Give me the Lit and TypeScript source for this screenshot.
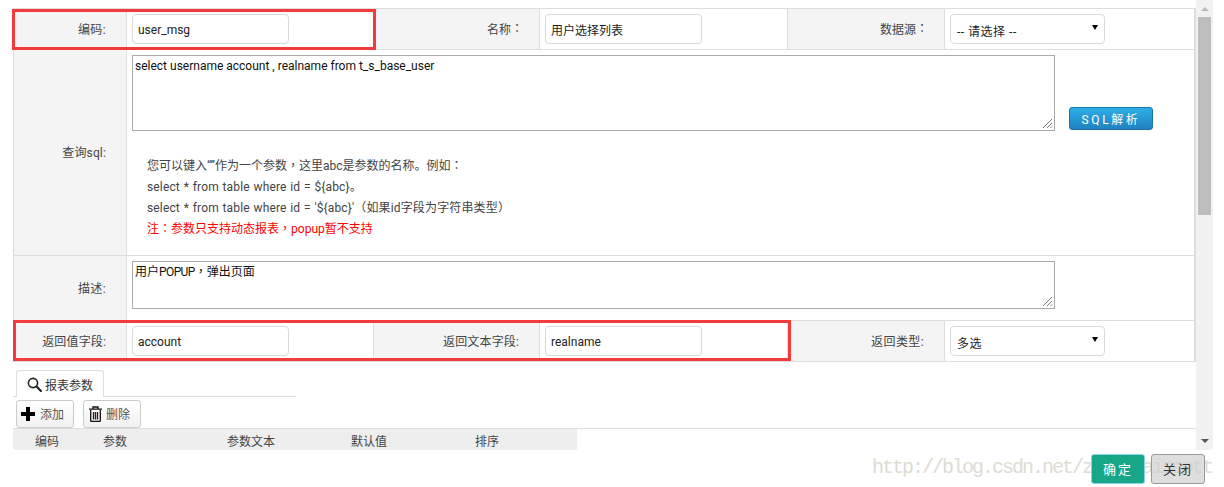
import { LitElement, html, css } from "lit";
import { customElement } from "lit/decorators.js";

const pun = (c: string) => html`<span class="pun">${c}</span>`;

@customElement("app-root")
export class AppRoot extends LitElement {
  static styles = css`
    :host { display: block; width: 1224px; height: 487px; overflow: hidden; background: #fff; position: relative;
      font: 12px Roboto, "Noto Sans CJK SC", sans-serif; color: #333; }
    * { box-sizing: border-box; }
    .pun { font-family: "Noto Sans CJK TC", sans-serif; line-height: 0; }
    .view { display: flex; height: 450px; padding-left: 13px; width: 1213px; position: relative; z-index: 1; }
    .content { width: 1183px; padding-top: 8px; position: relative; }
    .table { border: 1px solid #ddd; border-right-width: 2px; }
    .row { display: grid; grid-template-columns: 113px 247px 166px 248px 157px 1fr; border-top: 1px solid #ddd; height: 41px; }
    .row:first-child { border-top: 0; height: 40px; }
    .row.wide { grid-template-columns: 113px 1fr; }
    .row.sql { height: 206px; }
    .row.desc { height: 65px; }
    .label { background: #f4f4f4; border-right: 1px solid #ddd; display: flex; align-items: center; justify-content: flex-end; padding: 0 20px 2px 0; color: #444; letter-spacing: 0.4px; }
    .label.fine { letter-spacing: 0.15px; }
    .label.mid { padding-right: 16px; letter-spacing: 0; }
    .cell { padding: 5px; background: #fff; }
    .cell.bordered { border-right: 1px solid #ddd; }
    .input { width: 157px; height: 30px; border: 1px solid #d9d9d9; border-radius: 4px; background: #fff; padding: 0 5px; display: flex; align-items: center; color: #222; }
    .input.lat { padding-top: 1px; }
    .select { width: 155px; justify-content: space-between; padding: 2px 6px 0; letter-spacing: 0.5px; }
    .arrow { width: 0; height: 0; border: 3px solid transparent; border-top: 5px solid #000; border-bottom: 0; margin-top: -6px; }
    .area { border: 1px solid #aaa; background: #fff; padding: 2px; color: #111; width: 923px; position: relative; line-height: 16px; }
    .area svg { position: absolute; right: 1px; bottom: 1px; }
    .tight { letter-spacing: -0.6px; }
    .sqlTop { display: flex; align-items: flex-end; }
    .sqlTop .area { height: 76px; }
    .desc .area { height: 48px; }
    .sqlBtn { margin: 0 0 1px 14px; width: 84px; height: 23px; border: 1px solid #1b75a8; border-radius: 3px; background: linear-gradient(#2eaee6, #1f82c0); color: #fff; letter-spacing: 2.6px; display: flex; align-items: center; justify-content: center; font-size: 12px; }
    .help { margin: 25px 0 0 15px; line-height: 21px; color: #444; }
    .code { word-spacing: 0.6px; letter-spacing: 0.15px; }
    .red { color: #f00; }
    .mark { position: absolute; border: 3px solid #f33b3b; pointer-events: none; }
    .mark.a { left: -1px; top: 9px; width: 364px; height: 41px; }
    .mark.b { left: 0; top: 320px; width: 778px; height: 41px; }
    .tabs { margin-top: 8px; width: 283px; border-bottom: 1px solid #ddd; height: 27px; padding-left: 3px; }
    .tab { width: 88px; height: 27px; border: 1px solid #ddd; border-bottom: 0; border-radius: 4px 4px 0 0; background: #fff; display: flex; align-items: center; gap: 3px; padding-left: 10px; }
    .tools { display: flex; gap: 9px; padding: 3px 0 0 3px; height: 31px; }
    .tool { width: 58px; height: 28px; border: 1px solid #ccc; border-radius: 3px; background: linear-gradient(#fff, #f1f1f1); display: flex; align-items: center; padding: 0 0 1px 4px; color: #555; }
    .plus { margin-right: 5px; }
    .trash { margin: 0 4px 0 1px; }
    .thead { border-top: 1px solid #ddd; height: 22px; }
    .tbar { width: 564px; height: 21px; background: #eee; display: grid; grid-template-columns: 68px 124px 124px 124px 1fr; padding: 2px 0 0 22px; align-items: center; border-radius: 0 0 0 3px; color: #444; }
    .bar { width: 17px; height: 450px; background: #f1f1f1; border-radius: 0 0 4px 0; position: relative; display: flex; flex-direction: column; align-items: center; }
    .up, .down { width: 0; height: 0; border: 4px solid transparent; }
    .up { border-bottom: 4px solid #bbb; border-top: 0; margin-top: 7px; }
    .thumb { width: 13px; height: 198px; background: #bdbdbd; margin-top: 6px; }
    .down { border-top: 4px solid #555; border-bottom: 0; margin-top: auto; margin-bottom: 7px; }
    .watermark { position: absolute; left: 872px; top: 456px; font: 20px "Liberation Mono", monospace; letter-spacing: -2px; color: #dedcd2; white-space: nowrap; }
    .foot { position: absolute; right: 19px; top: 454px; display: flex; gap: 6px; z-index: 2; }
    .btn { width: 54px; height: 30px; border-radius: 3px; display: flex; align-items: center; justify-content: center; letter-spacing: 2px; font-size: 13px; padding-bottom: 1px; }
    .ok { background: #18a689; color: #fff; border: 1px solid #8fd0ea; }
    .close { background: rgba(208, 208, 208, 0.7); color: #333; border: 1px solid #999; }
  `;
  private grip() {
    return html`<svg width="11" height="11" viewBox="0 0 11 11"><path d="M1 10 10 1M5 10 10 5M8.5 10 10 8.5" stroke="#777" fill="none"/></svg>`;
  }
  render() {
    return html`
      <div class="view">
        <div class="content">
          <div class="table">
            <div class="row">
              <div class="label">编码:</div><div class="cell bordered"><div class="input lat">user_msg</div></div>
              <div class="label mid">名称${pun("：")}</div><div class="cell bordered"><div class="input">用户选择列表</div></div>
              <div class="label mid">数据源${pun("：")}</div><div class="cell"><div class="input select">-- 请选择 --<span class="arrow"></span></div></div>
            </div>
            <div class="row wide sql">
              <div class="label fine">查询sql:</div>
              <div class="cell">
                <div class="sqlTop">
                  <div class="area">select username account , realname from t_s_base_user${this.grip()}</div>
                  <div class="sqlBtn">SQL解析</div>
                </div>
                <div class="help">
                  <div>您可以键入“”作为一个参数${pun("，")}这里abc是参数的名称。例如${pun("：")}</div>
                  <div class="code">select * from table where id = \${abc}。</div>
                  <div class="code">select * from table where id = '\${abc}'${pun("（")}如果id字段为字符串类型${pun("）")}</div>
                  <div class="red">注${pun("：")}参数只支持动态报表${pun("，")}popup暂不支持</div>
                </div>
              </div>
            </div>
            <div class="row wide desc">
              <div class="label">描述:</div>
              <div class="cell"><div class="area">用户<span class="tight">POPUP</span>${pun("，")}弹出页面${this.grip()}</div></div>
            </div>
            <div class="row">
              <div class="label fine">返回值字段:</div><div class="cell bordered"><div class="input lat">account</div></div>
              <div class="label fine">返回文本字段:</div><div class="cell bordered"><div class="input lat">realname</div></div>
              <div class="label">返回类型:</div><div class="cell"><div class="input select">多选<span class="arrow"></span></div></div>
            </div>
          </div>
          <div class="mark a"></div>
          <div class="mark b"></div>
          <div class="tabs">
            <div class="tab">
              <svg width="15" height="15" viewBox="0 0 15 15"><circle cx="6" cy="6" r="4.6" fill="none" stroke="#222" stroke-width="1.6"/><path d="M9.5 9.5 14 14" stroke="#222" stroke-width="2.2" stroke-linecap="round"/></svg>
              <span>报表参数</span>
            </div>
          </div>
          <div class="tools">
            <div class="tool">
              <svg class="plus" width="14" height="14" viewBox="0 0 14 14"><path d="M5 0h4v5h5v4H9v5H5V9H0V5h5z" fill="#000"/></svg>
              <span>添加</span>
            </div>
            <div class="tool">
              <svg class="trash" width="13" height="16" viewBox="0 0 13 16"><path d="M0 3.2h13M4 3V1h5v2M1.7 4v10.5a1 1 0 0 0 1 1h7.6a1 1 0 0 0 1-1V4" fill="none" stroke="#111" stroke-width="1.3"/><path d="M4.5 6v7.5M6.5 6v7.5M8.5 6v7.5" fill="none" stroke="#411" stroke-width="1.3"/></svg>
              <span>删除</span>
            </div>
          </div>
          <div class="thead">
            <div class="tbar"><span>编码</span><span>参数</span><span>参数文本</span><span>默认值</span><span>排序</span></div>
          </div>
        </div>
        <div class="bar"><span class="up"></span><span class="thumb"></span><span class="down"></span></div>
      </div>
      <div class="watermark">http://blog.csdn.net/zhangdaiscott</div>
      <div class="foot"><div class="btn ok">确定</div><div class="btn close">关闭</div></div>
    `;
  }
}
